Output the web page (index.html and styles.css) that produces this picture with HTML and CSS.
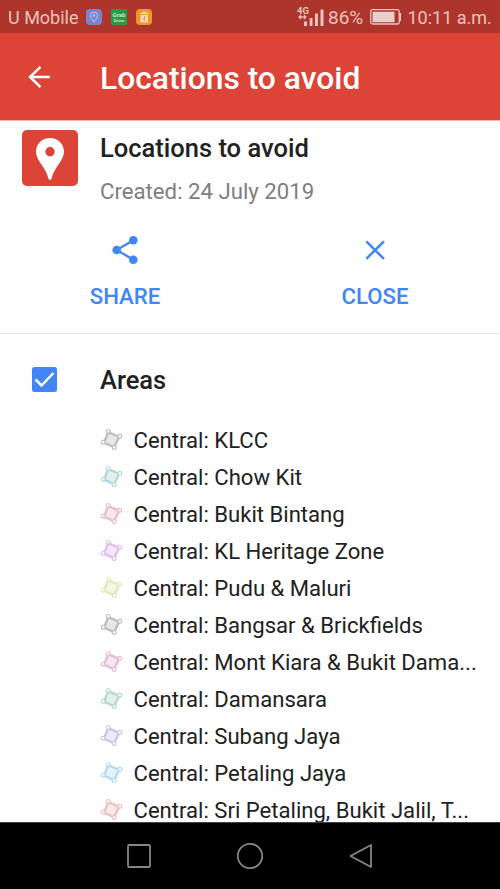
FILE: index.html
```html
<!DOCTYPE html>
<html lang="en">
<head>
<meta charset="utf-8">
<title>Locations to avoid</title>
<link rel="stylesheet" href="styles.css">
</head>
<body>
<svg class="defs" width="0" height="0" aria-hidden="true">
  <symbol id="area" viewBox="0 0 24 24">
    <path d="M8.3 4.2 19.2 8.8 14 19.2 4 14.7Z" fill="currentColor" fill-opacity=".35" stroke="currentColor" stroke-width="2.500"/>
    <g fill="#fff" stroke="currentColor" stroke-width="1.200"><circle cx="8.3" cy="3.4" r="1.900"/><circle cx="19.800" cy="8.200" r="1.900"/><circle cx="14.200" cy="19.500" r="1.900"/><circle cx="3.200" cy="14.200" r="1.900"/></g>
  </symbol>
</svg>
<div class="screen">
  <div class="status">
    <span class="carrier">U Mobile</span>
    <svg class="notices" width="66" height="16" viewBox="0 0 66 16">
      <rect width="16" height="16" rx="4" fill="#7b83cb"/>
      <path d="M8 13C6.500 10.500 4.500 9 4.500 6.500a3.500 3.500 0 0 1 7 0C11.500 9 9.500 10.500 8 13Z" fill="none" stroke="#c5c6e8"/><circle cx="8" cy="6.500" r="1.200" fill="#c5c6e8"/>
      <rect x="25" width="16" height="16" rx="1" fill="#289a48"/>
      <text x="33" y="8" class="grab">Grab</text><text x="33" y="12.500" class="driver">Driver</text>
      <rect x="50" width="16" height="16" rx="4" fill="#ed9724"/>
      <path d="M54.500 6h7.500v7.500h-7.500z" fill="#f5d9c5"/><path d="M54 4.500h8.500M56.500 4.500V3h3.500v1.500" fill="none" stroke="#f5d9c5"/><path d="M58.500 7v3h-2m2 0v2" fill="none" stroke="#ed9724"/>
    </svg>
    <svg class="signal" width="28" height="28" viewBox="0 -3 28 28">
      <text x="0" y="6.500" class="net">4G</text>
      <path d="M1 10 4 7.300v5.400zM9.800 10 6.800 7.300v5.400zM4 9.300h3v1.400H4zM7 14.500h3V19H7zM12.700 11h2.800v8h-2.800zM18 6.500h2.900V19H18zM23.500 2.500h3V19h-3z" fill="#e9c3bf"/>
    </svg>
    <span class="percent">86%</span>
    <svg class="battery" width="32" height="16" viewBox="0 0 32 16"><rect x=".7" y=".7" width="28.500" height="14.300" rx="2" fill="none" stroke="#e9c3bf" stroke-width="1.300"/><path d="M2.500 2.700h22v10.500h-22zM29.500 4H31v8h-1.500z" fill="#e9cfcc"/></svg>
    <span class="time">10:11 a.m.</span>
  </div>
  <header class="bar">
    <svg class="back" width="24" height="24" viewBox="0 0 24 24"><path d="M23 12H3M13.500 1.800 3 12l10.500 10.200" fill="none" stroke="#fff" stroke-width="2.500"/></svg>
    <h1>Locations to avoid</h1>
  </header>
  <main>
    <section class="info">
      <svg class="logo" width="56" height="56" viewBox="0 0 56 56"><rect width="56" height="56" rx="5" fill="#db4437"/><path d="M28 8C20 8 14 14 14 21.800c0 8.500 9.500 15.200 12.300 26.200q.4 2 1.700 2t1.700-2C32.500 37 42 30.300 42 21.800 42 14 36 8 28 8Z" fill="#fff"/><circle cx="28" cy="21.700" r="4.700" fill="#db4437"/></svg>
      <div><h2>Locations to avoid</h2><p class="created">Created: 24 July 2019</p></div>
    </section>
    <section class="actions">
      <div class="action">
        <svg width="30" height="30" viewBox="0 0 30 30"><path d="M23.300 5.300 6.700 15l16.600 9.700" fill="none" stroke="#4285f4" stroke-width="2.300"/><g fill="#4285f4"><circle cx="23.300" cy="5.300" r="4.300"/><circle cx="6.700" cy="15" r="4.300"/><circle cx="23.300" cy="24.700" r="4.300"/></g></svg>
        <span class="share">SHARE</span>
      </div>
      <div class="action">
        <svg width="30" height="30" viewBox="0 0 30 30"><path d="m6.300 6.300 17.600 17.600m0-17.600L6.300 23.900" stroke="#4285f4" stroke-width="2.500"/></svg>
        <span class="close">CLOSE</span>
      </div>
    </section>
    <section class="layer">
      <svg class="check" width="25" height="25" viewBox="0 0 25 25"><rect width="25" height="25" rx="2.500" fill="#4285f4"/><path d="m3.500 12.500 6 6L21.500 6" fill="none" stroke="#fff" stroke-width="2.500"/></svg>
      <h3>Areas</h3>
    </section>
    <ul class="list">
      <li class="gray"><svg><use href="#area"/></svg><span>Central: KLCC</span></li>
      <li class="teal"><svg><use href="#area"/></svg><span>Central: Chow Kit</span></li>
      <li class="rose"><svg><use href="#area"/></svg><span>Central: Bukit Bintang</span></li>
      <li class="purple"><svg><use href="#area"/></svg><span>Central: KL Heritage Zone</span></li>
      <li class="lime"><svg><use href="#area"/></svg><span>Central: Pudu &amp; Maluri</span></li>
      <li class="gray"><svg><use href="#area"/></svg><span>Central: Bangsar &amp; Brickfields</span></li>
      <li class="pink"><svg><use href="#area"/></svg><span>Central: Mont Kiara &amp; Bukit Dama...</span></li>
      <li class="green"><svg><use href="#area"/></svg><span>Central: Damansara</span></li>
      <li class="indigo"><svg><use href="#area"/></svg><span>Central: Subang Jaya</span></li>
      <li class="blue"><svg><use href="#area"/></svg><span>Central: Petaling Jaya</span></li>
      <li class="red"><svg><use href="#area"/></svg><span>Central: Sri Petaling, Bukit Jalil, T...</span></li>
    </ul>
  </main>
  <nav class="nav">
    <svg width="26" height="26" viewBox="0 0 26 26"><rect x="2" y="2" width="22" height="22" rx="1"/></svg>
    <svg width="28" height="28" viewBox="0 0 28 28"><circle cx="14" cy="14" r="12.200"/></svg>
    <svg width="24" height="26" viewBox="0 0 24 26"><path d="M22 2v22L1.500 13Z" stroke-linejoin="round"/></svg>
  </nav>
</div>
</body>
</html>
```
FILE: styles.css
```css
* { box-sizing: border-box; }
body, h1, h2, h3, p, ul { margin: 0; padding: 0; }
body { font-family: Roboto, sans-serif; color: #212121; background: #fefefe; }
svg { display: block; flex: none; }
.defs { position: absolute; }
.screen { width: 500px; height: 889px; display: flex; flex-direction: column; overflow: hidden; }
.status { height: 33px; flex: none; background: #ad352b; color: #e9c3bf; display: flex; align-items: center; padding: 2px 0 0 8px; font-size: 18.5px; line-height: 31px; white-space: nowrap; }
.carrier { width: 78px; font-size: 18px; }
.notices { margin-top: -1px; }
.grab { font: bold 6px Roboto, sans-serif; fill: #cfe5cf; text-anchor: middle; }
.driver { font: bold 4px Roboto, sans-serif; fill: #cfe5cf; text-anchor: middle; }
.signal { margin: 0 0 0 145px; overflow: visible; }
.net { font: bold 9.5px Roboto, sans-serif; fill: #e9c3bf; }
.percent { width: 40px; margin-left: 3px; font-size: 19px; }
.battery { margin-left: 2px; margin-top: -1px; }
.time { margin-left: 5.5px; font-size: 18px; }
.bar { height: 87px; flex: none; background: #db4437; color: #fff; display: flex; align-items: center; padding-left: 27px; }
.back { margin: 1px 49px 0 0; }
h1 { font-size: 31.8px; font-weight: 500; line-height: 40px; margin-top: 2px; white-space: nowrap; }
main { flex: 1; min-height: 0; overflow: hidden; border-top: 1px solid #f5b5af; }
.info { display: flex; height: 104px; padding: 9px 0 0 22px; gap: 22px; }
h2 { font-size: 25.5px; line-height: 30px; font-weight: 500; margin-top: 3px; }
.created { font-size: 22.2px; line-height: 28px; margin-top: 14px; color: #7e7e7e; }
.actions { display: flex; height: 109px; border-bottom: 1px solid #e8e8e8; padding-top: 10px; }
.action { width: 250px; display: flex; flex-direction: column; align-items: center; gap: 16px; color: #4285f4; font-size: 22.2px; font-weight: 500; line-height: 30px; }
.layer { display: flex; align-items: center; height: 88px; padding: 2px 0 0 32px; }
h3 { font-size: 25.5px; line-height: 30px; font-weight: 500; margin: 2px 0 0 43px; }
.list { list-style: none; padding-left: 100px; }
.list li { height: 37px; display: flex; align-items: center; font-size: 22.1px; line-height: 37px; white-space: nowrap; }
.list svg { width: 24px; height: 24px; margin: -1px 9.5px 0 0; }
.gray svg { color: #c0c0c0; }
.teal svg { color: #b5d9d8; }
.rose svg { color: #e6bfcc; }
.purple svg { color: #e1bfee; }
.lime svg { color: #e3e8bd; }
.pink svg { color: #e4bfd5; }
.green svg { color: #b8d8d2; }
.indigo svg { color: #c7cae9; }
.blue svg { color: #b5dcf1; }
.red svg { color: #ebc4c0; }
.nav { height: 67px; flex: none; background: #000; border-top: 1px solid #444; display: flex; justify-content: space-between; align-items: center; padding: 0 127px 0 126px; }
.nav svg { fill: none; stroke: #858585; stroke-width: 1.8; }
.nav svg:nth-child(2) { margin-left: -2px; }
```
